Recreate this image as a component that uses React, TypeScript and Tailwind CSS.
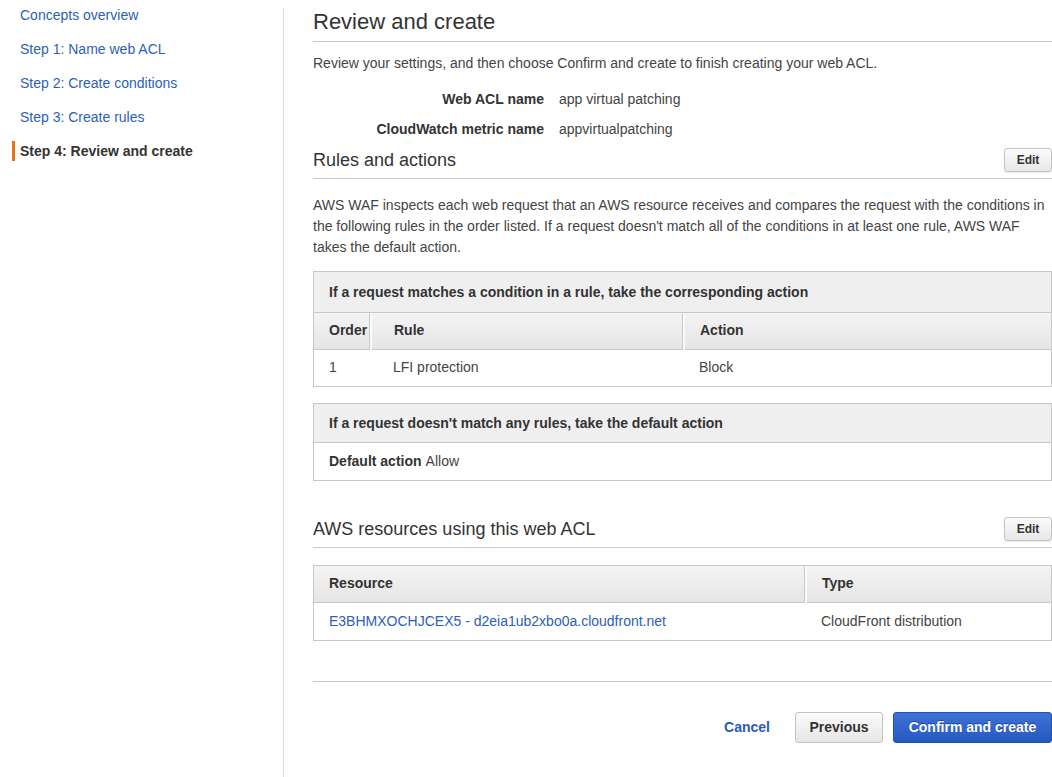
import React from "react";

const steps = [
  { label: "Concepts overview", active: false },
  { label: "Step 1: Name web ACL", active: false },
  { label: "Step 2: Create conditions", active: false },
  { label: "Step 3: Create rules", active: false },
  { label: "Step 4: Review and create", active: true },
];

const EditButton = () => (
  <button className="h-[24px] w-[48px] rounded-[3px] border border-[#c3c3c3] bg-gradient-to-b from-[#fbfbfb] to-[#e8e8e8] text-[12px] font-bold text-[#333] shadow-[0_1px_1px_rgba(0,0,0,0.08)]">
    Edit
  </button>
);

const SectionHeading = ({ title, edit }: { title: string; edit?: boolean }) => (
  <div className="flex items-end justify-between border-b border-[#c9c9c9] pb-[6px]">
    <h2 className="text-[18px] leading-[24px] text-[#333]">{title}</h2>
    {edit && <EditButton />}
  </div>
);

const thCls =
  "h-[36px] bg-gradient-to-b from-[#f4f4f4] to-[#e5e5e5] text-left text-[14px] font-bold text-[#333] border-b border-[#c8c8c8]";
const sepCls = "border-r-2 border-r-[#fafafa] shadow-[inset_-1px_0_0_#c8c8c8]";

export default function App() {
  return (
    <div
      className="flex min-h-[777px] w-[1052px] bg-white text-[14px] text-[#444]"
      style={{ fontFamily: '"Liberation Sans", Arial, Helvetica, sans-serif' }}
    >
      {/* sidebar */}
      <div className="flex w-[284px] shrink-0">
        <nav className="flex w-[283px] flex-col gap-[4px] pl-[12px]">
          {steps.map((s) => (
            <div key={s.label} className="flex h-[30px] items-center">
              {s.active ? (
                <>
                  <span className="mr-[5px] h-[20px] w-[3px] bg-[#e07512]" />
                  <span className="font-bold text-[#333]">{s.label}</span>
                </>
              ) : (
                <a className="pl-[8px] text-[#2c5fb7]" href="#">
                  {s.label}
                </a>
              )}
            </div>
          ))}
        </nav>
        <div className="mt-[8px] w-px bg-[#dcdcdc]" />
      </div>

      {/* main */}
      <main className="flex-1 pl-[29px]">
        <div className="border-b border-[#c9c9c9] pt-[9px] pb-[6px]">
          <h1 className="text-[22px] leading-[26px] text-[#333]">Review and create</h1>
        </div>
        <p className="mt-[11px] leading-[20px]">
          Review your settings, and then choose Confirm and create to finish creating your web ACL.
        </p>

        <div className="mt-[11px] grid grid-cols-[231px_1fr] gap-x-[15px]">
          <div className="h-[30px] text-right font-bold leading-[30px] text-[#333]">Web ACL name</div>
          <div className="h-[30px] leading-[30px]">app virtual patching</div>
          <div className="h-[30px] text-right font-bold leading-[30px] text-[#333]">CloudWatch metric name</div>
          <div className="h-[30px] leading-[30px]">appvirtualpatching</div>
        </div>

        <div className="mt-[4px]">
          <SectionHeading title="Rules and actions" edit />
        </div>

        <p className="mt-[16px] leading-[21px]">
          AWS WAF inspects each web request that an AWS resource receives and compares the request with the conditions in
          <br />
          the following rules in the order listed. If a request doesn't match all of the conditions in at least one rule, AWS WAF
          <br />
          takes the default action.
        </p>

        <div className="mt-[13px] border border-[#c8c8c8]">
          <div className="flex h-[41px] items-center border-b border-[#c8c8c8] bg-[#efefef] px-[15px] font-bold text-[#333]">
            If a request matches a condition in a rule, take the corresponding action
          </div>
          <table className="w-full table-fixed border-collapse">
            <colgroup>
              <col className="w-[57px]" />
              <col className="w-[313px]" />
              <col />
            </colgroup>
            <thead>
              <tr>
                <th className={`${thCls} ${sepCls} pl-[15px]`}>Order</th>
                <th className={`${thCls} ${sepCls} pl-[22px]`}>Rule</th>
                <th className={`${thCls} pl-[15px]`}>Action</th>
              </tr>
            </thead>
            <tbody>
              <tr className="h-[37px]">
                <td className="pl-[15px]">1</td>
                <td className="pl-[22px]">LFI protection</td>
                <td className="pl-[15px]">Block</td>
              </tr>
            </tbody>
          </table>
        </div>

        <div className="mt-[16px] border border-[#c8c8c8]">
          <div className="flex h-[39px] items-center border-b border-[#c8c8c8] bg-[#efefef] px-[15px] font-bold text-[#333]">
            If a request doesn't match any rules, take the default action
          </div>
          <div className="flex h-[37px] items-center px-[15px]">
            <span className="mr-[4px] font-bold text-[#333]">Default action</span>Allow
          </div>
        </div>

        <div className="mt-[36px]">
          <SectionHeading title="AWS resources using this web ACL" edit />
        </div>

        <div className="mt-[17px] border border-[#c8c8c8]">
          <table className="w-full table-fixed border-collapse">
            <colgroup>
              <col className="w-[492px]" />
              <col />
            </colgroup>
            <thead>
              <tr>
                <th className={`${thCls} ${sepCls} pl-[15px]`}>Resource</th>
                <th className={`${thCls} pl-[15px]`}>Type</th>
              </tr>
            </thead>
            <tbody>
              <tr className="h-[38px]">
                <td className="pl-[15px]">
                  <a href="#" className="text-[#2c5fb7]">
                    E3BHMXOCHJCEX5 - d2eia1ub2xbo0a.cloudfront.net
                  </a>
                </td>
                <td className="pl-[15px]">CloudFront distribution</td>
              </tr>
            </tbody>
          </table>
        </div>

        <div className="mt-[40px] border-t border-[#c9c9c9]" />

        <div className="mt-[30px] flex items-center justify-end">
          <a href="#" className="mr-[25px] font-bold text-[#2a5bb5]">
            Cancel
          </a>
          <button className="h-[31px] w-[88px] rounded-[3px] border border-[#c3c3c3] bg-gradient-to-b from-[#fbfbfb] to-[#e6e6e6] font-bold text-[#333]">
            Previous
          </button>
          <button className="ml-[10px] h-[31px] w-[159px] rounded-[3px] border border-[#2450a8] bg-gradient-to-b from-[#3f72d6] to-[#2459c2] font-bold text-white [text-shadow:0_-1px_0_rgba(0,0,0,0.35)]">
            Confirm and create
          </button>
        </div>
      </main>
    </div>
  );
}
